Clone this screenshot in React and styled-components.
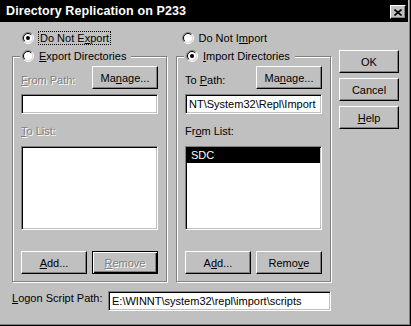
import styled, { createGlobalStyle } from "styled-components";

const Global = createGlobalStyle`
    body {
        margin: 0;
        background: #c0c0c0;
        font-family: "Liberation Sans", Arial, sans-serif;
        font-size: 11px;
        color: #000;
    }
`;

function Radio({ checked }){
    return (
        <RadioIcon width="12" height="12" viewBox="0 0 12 12">
            <circle cx="6" cy="6" r="4.5" fill="#fff" />
            <path d="M9.9 2.1 A5.5 5.5 0 0 0 2.1 9.9" fill="none" stroke="#808080" />
            <path d="M2.1 9.9 A5.5 5.5 0 0 0 9.9 2.1" fill="none" stroke="#fff" />
            <path d="M9.2 2.8 A4.5 4.5 0 0 0 2.8 9.2" fill="none" stroke="#000" />
            <path d="M2.8 9.2 A4.5 4.5 0 0 0 9.2 2.8" fill="none" stroke="#dfdfdf" />
            {checked && <circle cx="6" cy="6" r="2" fill="#000" />}
        </RadioIcon>
    );
}

export default function App(){
    return(
        <>
            <Global />
            <Window>
                <TitleBar>
                    <Title>Directory Replication on P233</Title>
                    <CloseButton>
                        <svg width="8" height="7" viewBox="0 0 8 7">
                            <path d="M0.5 0.5 L7.5 6.5 M7.5 0.5 L0.5 6.5" stroke="#000" strokeWidth="1.6" />
                        </svg>
                    </CloseButton>
                </TitleBar>
                <Body>
                    <Main>
                        <RadioRow>
                            <RadioCell>
                                <Radio checked />
                                <Focus>Do Not E<u>x</u>port</Focus>
                            </RadioCell>
                            <RadioCell>
                                <Radio />
                                <span>Do Not I<u>m</u>port</span>
                            </RadioCell>
                        </RadioRow>
                        <Groups>
                            <Group>
                                <Legend>
                                    <Radio />
                                    <span><u>E</u>xport Directories</span>
                                </Legend>
                                <PathRow>
                                    <Label $disabled><u>F</u>rom Path:</Label>
                                    <Button>Ma<u>n</u>age...</Button>
                                </PathRow>
                                <TextBox />
                                <ListLabel $disabled><u>T</u>o List:</ListLabel>
                                <ListBox />
                                <ButtonRow>
                                    <Button><u>A</u>dd...</Button>
                                    <Button $default $disabled><u>R</u>emove</Button>
                                </ButtonRow>
                            </Group>
                            <Group>
                                <Legend>
                                    <Radio checked />
                                    <span><u>I</u>mport Directories</span>
                                </Legend>
                                <PathRow>
                                    <Label>To <u>P</u>ath:</Label>
                                    <Button>Ma<u>n</u>age...</Button>
                                </PathRow>
                                <TextBox>NT\System32\Repl\Import</TextBox>
                                <ListLabel>Fr<u>o</u>m List:</ListLabel>
                                <ListBox>
                                    <ListItem $selected>SDC</ListItem>
                                </ListBox>
                                <ButtonRow>
                                    <Button>A<u>d</u>d...</Button>
                                    <Button>Remo<u>v</u>e</Button>
                                </ButtonRow>
                            </Group>
                        </Groups>
                        <LogonRow>
                            <Label><u>L</u>ogon Script Path:</Label>
                            <TextBox $width="223px">E:\WINNT\system32\repl\import\scripts</TextBox>
                        </LogonRow>
                    </Main>
                    <Side>
                        <Button $width="60px">OK</Button>
                        <Button $width="60px">Cancel</Button>
                        <Button $width="60px"><u>H</u>elp</Button>
                    </Side>
                </Body>
            </Window>
        </>
    );
}

const Window = styled.div`
    box-sizing: border-box;
    width: 411px;
    height: 326px;
    background: #c0c0c0;
    border-right: 1px solid #000;
    border-bottom: 1px solid #000;
    box-shadow: inset -1px -1px #808080;
`;

const TitleBar = styled.div`
    display: flex;
    align-items: center;
    justify-content: space-between;
    height: 22px;
    margin-right: 2px;
    padding: 0 2px 0 6px;
    background: #000;
`;

const Title = styled.span`
    color: #fff;
    font-weight: bold;
    font-size: 12.5px;
    letter-spacing: 0.1px;
`;

const CloseButton = styled.div`
    box-sizing: border-box;
    width: 16px;
    height: 14px;
    margin-top: 2px;
    display: flex;
    align-items: center;
    justify-content: center;
    background: #c0c0c0;
    border: 1px solid;
    border-color: #fff #000 #000 #fff;
    box-shadow: inset -1px -1px #808080;
`;

const Body = styled.div`
    display: flex;
    padding: 8px 0 0 12px;
`;

const Main = styled.div`
    width: 319px;
    display: flex;
    flex-direction: column;
`;

const Side = styled.div`
    display: flex;
    flex-direction: column;
    gap: 5px;
    margin: 20px 0 0 8px;
`;

const RadioRow = styled.div`
    display: flex;
    height: 16px;
`;

const RadioCell = styled.div`
    width: 165px;
    box-sizing: border-box;
    padding-left: 10px;
    display: flex;
    align-items: center;
    gap: 5px;
`;

const RadioIcon = styled.svg`
    flex-shrink: 0;
`;

const Focus = styled.span`
    margin-left: -1px;
    padding: 0 1px;
    border: 1px dotted #000;
    line-height: 12px;
`;

const Groups = styled.div`
    display: flex;
    gap: 9px;
    margin-top: 3px;
`;

const Group = styled.fieldset`
    box-sizing: border-box;
    width: 155px;
    margin: 0;
    padding: 3px 8px 7px 8px;
    border: 1px solid #808080;
    box-shadow: inset 1px 1px #fff, 1px 1px #fff;
    display: flex;
    flex-direction: column;
    min-width: 0;
`;

const Legend = styled.legend`
    display: flex;
    align-items: center;
    gap: 5px;
    height: 14px;
    margin-left: -1px;
    padding: 0 5px 0 2px;
    background: #c0c0c0;
`;

const PathRow = styled.div`
    display: flex;
    justify-content: space-between;
    align-items: flex-end;
    height: 23px;
`;

const Label = styled.span`
    line-height: 13px;
    margin-bottom: 2px;
    white-space: nowrap;
    color: ${props => props.$disabled ? '#808080' : '#000'};
    text-shadow: ${props => props.$disabled ? '1px 1px #fff' : 'none'};
`;

const ListLabel = styled(Label)`
    margin: 10px 0 0;
    line-height: 14px;
`;

const TextBox = styled.div`
    box-sizing: border-box;
    width: ${props => props.$width || '137px'};
    height: 20px;
    margin-top: 5px;
    padding: 0 3px;
    background: #fff;
    border: 1px solid;
    border-color: #808080 #fff #fff #808080;
    box-shadow: inset 1px 1px #000, inset -1px -1px #c0c0c0;
    line-height: 18px;
    white-space: nowrap;
    overflow: hidden;
`;

const ListBox = styled.div`
    box-sizing: border-box;
    height: 84px;
    margin-top: 8px;
    padding: 1px;
    background: #fff;
    border: 1px solid;
    border-color: #808080 #fff #fff #808080;
    box-shadow: inset 1px 1px #000, inset -1px -1px #c0c0c0;
`;

const ListItem = styled.div`
    height: 15px;
    line-height: 15px;
    padding-left: 4px;
    background: ${props => props.$selected ? '#000' : 'transparent'};
    color: ${props => props.$selected ? '#fff' : '#000'};
`;

const ButtonRow = styled.div`
    display: flex;
    justify-content: space-between;
    margin-top: 21px;
`;

const Button = styled.div`
    box-sizing: border-box;
    width: ${props => props.$width || '66px'};
    height: 23px;
    display: flex;
    align-items: center;
    justify-content: center;
    background: #c0c0c0;
    border: 1px solid;
    border-color: ${props => props.$default ? '#000' : '#fff #000 #000 #fff'};
    box-shadow: ${props => props.$default
        ? 'inset 1px 1px #fff, inset -1px -1px #000, inset -2px -2px #808080'
        : 'inset -1px -1px #808080'};
    color: ${props => props.$disabled ? '#808080' : '#000'};
    text-shadow: ${props => props.$disabled ? '1px 1px #fff' : 'none'};
    white-space: nowrap;
`;

const LogonRow = styled.div`
    display: flex;
    justify-content: space-between;
    align-items: center;
    margin-top: 4px;

    ${Label} {
        margin-bottom: 0;
    }
`;
